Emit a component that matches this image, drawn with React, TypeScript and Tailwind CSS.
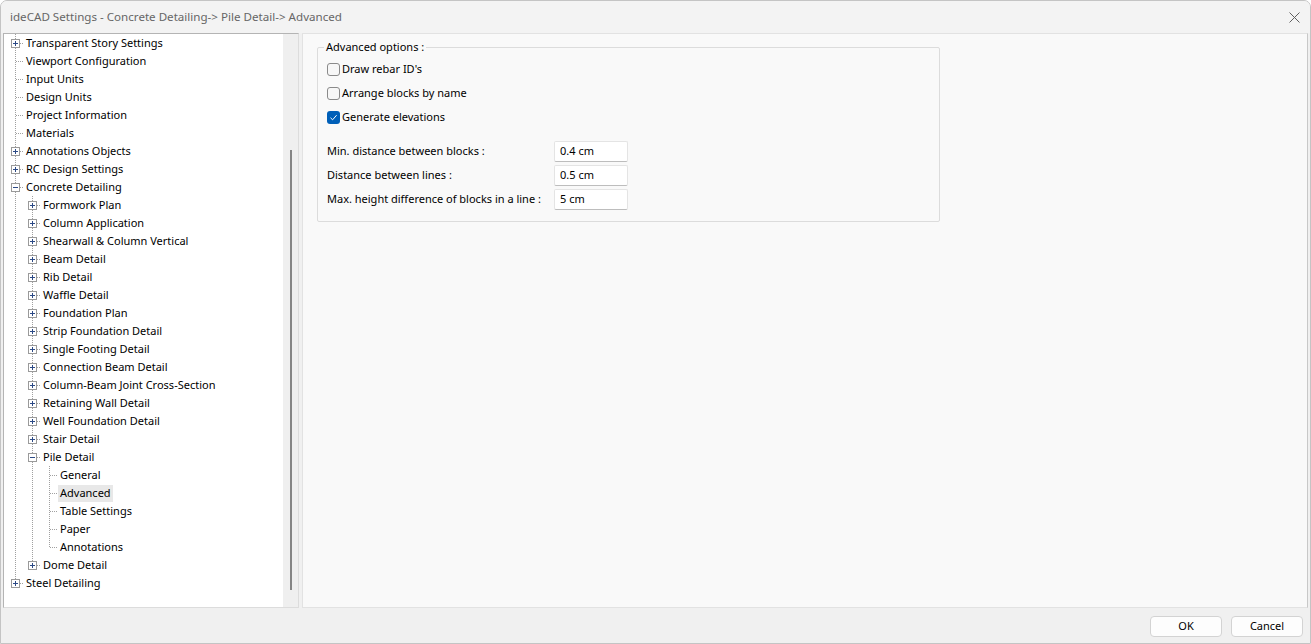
import React from "react";

type Node = {
  label: string;
  level: number;
  exp?: "+" | "-";
  selected?: boolean;
};

const nodes: Node[] = [
  { label: "Transparent Story Settings", level: 0, exp: "+" },
  { label: "Viewport Configuration", level: 0 },
  { label: "Input Units", level: 0 },
  { label: "Design Units", level: 0 },
  { label: "Project Information", level: 0 },
  { label: "Materials", level: 0 },
  { label: "Annotations Objects", level: 0, exp: "+" },
  { label: "RC Design Settings", level: 0, exp: "+" },
  { label: "Concrete Detailing", level: 0, exp: "-" },
  { label: "Formwork Plan", level: 1, exp: "+" },
  { label: "Column Application", level: 1, exp: "+" },
  { label: "Shearwall & Column Vertical", level: 1, exp: "+" },
  { label: "Beam Detail", level: 1, exp: "+" },
  { label: "Rib Detail", level: 1, exp: "+" },
  { label: "Waffle Detail", level: 1, exp: "+" },
  { label: "Foundation Plan", level: 1, exp: "+" },
  { label: "Strip Foundation Detail", level: 1, exp: "+" },
  { label: "Single Footing Detail", level: 1, exp: "+" },
  { label: "Connection Beam Detail", level: 1, exp: "+" },
  { label: "Column-Beam Joint Cross-Section", level: 1, exp: "+" },
  { label: "Retaining Wall Detail", level: 1, exp: "+" },
  { label: "Well Foundation Detail", level: 1, exp: "+" },
  { label: "Stair Detail", level: 1, exp: "+" },
  { label: "Pile Detail", level: 1, exp: "-" },
  { label: "General", level: 2 },
  { label: "Advanced", level: 2, selected: true },
  { label: "Table Settings", level: 2 },
  { label: "Paper", level: 2 },
  { label: "Annotations", level: 2 },
  { label: "Dome Detail", level: 1, exp: "+" },
  { label: "Steel Detailing", level: 0, exp: "+" },
];

// does node i have a later sibling
function hasNext(i: number) {
  const lvl = nodes[i].level;
  for (let j = i + 1; j < nodes.length; j++) {
    if (nodes[j].level < lvl) return false;
    if (nodes[j].level === lvl) return true;
  }
  return false;
}

function ancestorContinues(i: number, k: number) {
  for (let j = i - 1; j >= 0; j--) {
    if (nodes[j].level === k) return hasNext(j);
  }
  return false;
}

const DOT = "#a0a0a0";

function Cell({ through, own, last, exp }: { through?: boolean; own?: boolean; last?: boolean; exp?: "+" | "-" }) {
  return (
    <svg width="17" height="18" className="shrink-0" shapeRendering="crispEdges">
      {through && <line x1="8.5" y1="0" x2="8.5" y2="18" stroke={DOT} strokeDasharray="1 1" />}
      {own && (
        <>
          <line x1="8.5" y1="0" x2="8.5" y2={last ? 9 : 18} stroke={DOT} strokeDasharray="1 1" />
          <line x1="9" y1="9.5" x2="17" y2="9.5" stroke={DOT} strokeDasharray="1 1" />
        </>
      )}
      {exp && (
        <>
          <rect x="4.5" y="5.5" width="8" height="8" fill="#fff" stroke="#9a9a9a" />
          <line x1="6" y1="9.5" x2="11" y2="9.5" stroke="#2c4a86" />
          {exp === "+" && <line x1="8.5" y1="7" x2="8.5" y2="12" stroke="#2c4a86" />}
        </>
      )}
    </svg>
  );
}

function TreeRow({ node, i }: { node: Node; i: number }) {
  const cells = [];
  for (let k = 0; k < node.level; k++) {
    cells.push(<Cell key={k} through={ancestorContinues(i, k)} />);
  }
  return (
    <div className="flex h-[18px] items-center">
      {cells}
      <Cell own last={!hasNext(i)} exp={node.exp} />
      <span
        className={
          "flex h-[17px] items-center whitespace-nowrap px-[2px] " +
          (node.selected ? "bg-[#e8e8e8]" : "")
        }
      >
        {node.label}
      </span>
    </div>
  );
}

function Checkbox({ label, checked }: { label: string; checked?: boolean }) {
  return (
    <div className="flex h-[24px] items-center">
      {checked ? (
        <span className="flex h-[13px] w-[13px] items-center justify-center rounded-[3px] bg-[#005fb8]">
          <svg width="9" height="9" viewBox="0 0 9 9">
            <path d="M1.5 4.8 L3.6 6.8 L7.6 2.2" fill="none" stroke="#fff" strokeWidth="1" />
          </svg>
        </span>
      ) : (
        <span className="h-[13px] w-[13px] rounded-[3px] border border-[#8a8a8a] bg-[#f7f7f7]" />
      )}
      <span className="ml-[2px]">{label}</span>
    </div>
  );
}

function Field({ label, value }: { label: string; value: string }) {
  return (
    <div className="flex h-[24px] items-center">
      <span className="w-[227px] whitespace-nowrap">{label}</span>
      <div className="flex h-[21px] w-[74px] items-center rounded-[2px] border border-[#e4e4e4] border-b-[#bdbdbd] bg-white pl-[5px]">
        {value}
      </div>
    </div>
  );
}

function Button({ children }: { children: React.ReactNode }) {
  return (
    <button className="flex h-[21px] w-[72px] items-center justify-center rounded-[4px] border border-[#d3d3d3] bg-[#fdfdfd]">
      {children}
    </button>
  );
}

export default function App() {
  return (
    <div className="flex h-[644px] w-[1311px] flex-col overflow-hidden rounded-t-[7px] border border-[#c4c4c4] bg-[#f0f0f0] font-['Noto_Sans',sans-serif] text-[11px] text-black">
      <div className="flex h-[32px] shrink-0 items-center justify-between bg-[#f3f3f3] pl-[9px] pr-[10px]">
        <span className="text-[11.6px] text-[#666]">ideCAD Settings - Concrete Detailing-&gt; Pile Detail-&gt; Advanced</span>
        <svg width="11" height="11" viewBox="0 0 11 11">
          <path d="M0.5 0.5 L10.5 10.5 M10.5 0.5 L0.5 10.5" stroke="#5f5f5f" strokeWidth="1" />
        </svg>
      </div>

      <div className="flex h-[575px] shrink-0 gap-[3px] pl-[2px] pr-[2px]">
        <div className="flex w-[296px] border border-[#b4b4b4] border-b-[#dcdcdc] border-r-[#dcdcdc] bg-white">
          <div className="flex-1 overflow-hidden pl-[3px]">
            {nodes.map((n, i) => (
              <TreeRow key={i} node={n} i={i} />
            ))}
          </div>
          <div className="flex w-[15px] flex-col bg-[#efefef] pb-[17px] pt-[116px]">
            <div className="ml-[7px] w-[2px] flex-1 bg-[#858585]" />
          </div>
        </div>

        <div className="flex-1 border border-[#e2e2e2] border-r-[#c8c8c8] bg-[#f9f9f9] pl-[14px] pt-[5px]">
          <fieldset className="w-[623px] rounded-[2px] border border-[#dcdcdc] pb-[9px] pl-[6px]">
            <legend className="px-[2px]">Advanced options :</legend>
            <div className="pl-[3px] pt-[2px]">
              <Checkbox label="Draw rebar ID's" />
              <Checkbox label="Arrange blocks by name" />
              <Checkbox label="Generate elevations" checked />
              <div className="mt-[10px]">
                <Field label="Min. distance between blocks :" value="0.4 cm" />
                <Field label="Distance between lines :" value="0.5 cm" />
                <Field label="Max. height difference of blocks in a line :" value="5 cm" />
              </div>
            </div>
          </fieldset>
        </div>
      </div>

      <div className="flex flex-1 justify-end gap-[9px] pr-[7px] pt-[8px]">
        <Button>OK</Button>
        <Button>Cancel</Button>
      </div>
    </div>
  );
}
